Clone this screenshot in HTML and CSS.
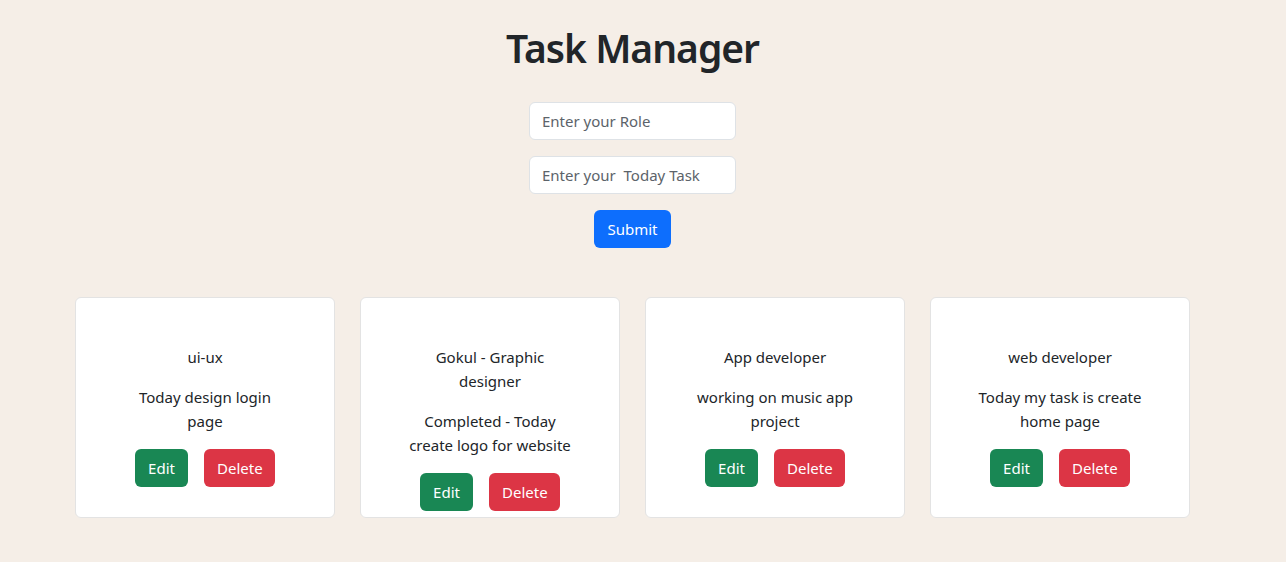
FILE: index.html
```html
<!DOCTYPE html>
<html lang="en">
<head>
<meta charset="utf-8">
<title>Task Manager</title>
<link rel="stylesheet" href="styles.css">
</head>
<body>
<main class="page">
  <h1 class="title">Task Manager</h1>
  <form class="task-form">
    <input class="field" type="text" placeholder="Enter your Role">
    <input class="field" type="text" placeholder="Enter your  Today Task">
    <button class="btn btn-primary" type="button">Submit</button>
  </form>
  <section class="cards">
    <div class="card">
      <p class="role">ui-ux</p>
      <p class="task">Today design login page</p>
      <div class="actions"><button class="btn btn-success">Edit</button><button class="btn btn-danger">Delete</button></div>
    </div>
    <div class="card">
      <p class="role">Gokul - Graphic designer</p>
      <p class="task">Completed - Today create logo for website</p>
      <div class="actions"><button class="btn btn-success">Edit</button><button class="btn btn-danger">Delete</button></div>
    </div>
    <div class="card">
      <p class="role">App developer</p>
      <p class="task">working on music app project</p>
      <div class="actions"><button class="btn btn-success">Edit</button><button class="btn btn-danger">Delete</button></div>
    </div>
    <div class="card">
      <p class="role">web developer</p>
      <p class="task">Today my task is create home page</p>
      <div class="actions"><button class="btn btn-success">Edit</button><button class="btn btn-danger">Delete</button></div>
    </div>
  </section>
</main>
</body>
</html>
```
FILE: styles.css
```css
* { box-sizing: border-box; }
html, body { margin: 0; padding: 0; }
body {
  background: #f5eee7;
  color: #212529;
  font-family: "Noto Sans", "Open Sans", sans-serif;
  font-size: 16px;
  line-height: 1.5;
}
.page {
  width: 1265px;
  padding-top: 24px;
  display: flex;
  flex-direction: column;
  align-items: center;
}
.title {
  margin: 0;
  font-size: 39px;
  font-weight: 600;
  line-height: 48px;
  letter-spacing: -1px;
}
.task-form {
  margin-top: 30px;
  display: flex;
  flex-direction: column;
  align-items: center;
  gap: 16px;
}
.field {
  width: 207px;
  height: 38px;
  padding: 6px 12px;
  border: 1px solid #dee2e6;
  border-radius: 6px;
  background: #fff;
  font: inherit;
  font-size: 15px;
  color: #212529;
}
.field::placeholder { color: #5c636a; }
.btn {
  height: 38px;
  padding: 6px 12px;
  border: 1px solid transparent;
  border-radius: 6px;
  font: inherit;
  font-size: 15px;
  color: #fff;
  cursor: pointer;
}
.btn-primary { background: #0d6efd; width: 77px; }
.btn-success { background: #198754; width: 53px; }
.btn-danger { background: #dc3545; width: 71px; }
.cards {
  margin-top: 49px;
  display: flex;
  gap: 25px;
}
.card {
  width: 260px;
  height: 221px;
  padding: 47px 44px 0;
  background: #fff;
  border: 1px solid #e3e3e3;
  border-radius: 6px;
  text-align: center;
  font-size: 15px;
  line-height: 24px;
}
.card p { margin: 0 0 16px; }
.actions {
  display: flex;
  justify-content: center;
  gap: 16px;
}
```
